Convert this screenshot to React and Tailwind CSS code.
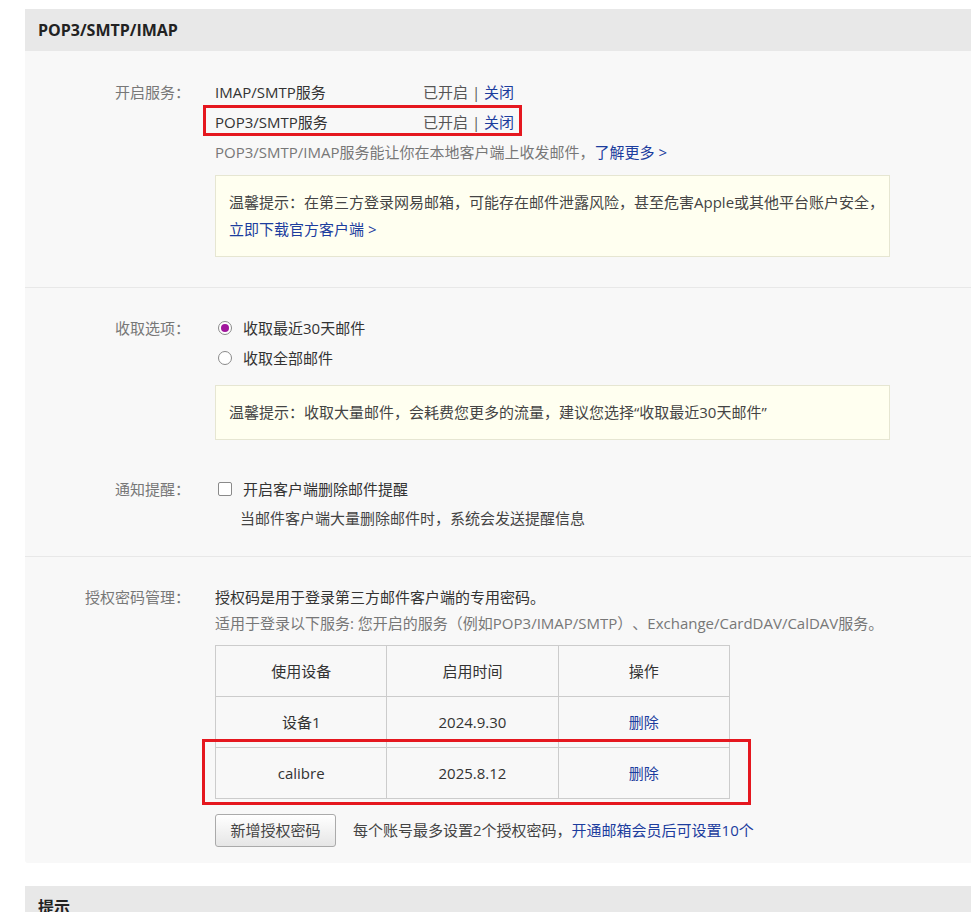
import React from 'react';

const Label = ({ text, lh = 'leading-[30px]' }) => (
  <div className={`w-[165px] shrink-0 whitespace-nowrap text-right text-[#777] ${lh}`}>
    {text}
    <span className="inline-block w-[15px] text-center">：</span>
  </div>
);

const Radio = ({ checked }) => (
  <span className="flex h-[14px] w-[14px] items-center justify-center rounded-full border border-[#8a8a8a] bg-white">
    {checked && <span className="h-[8px] w-[8px] rounded-full bg-[#a0169c]" />}
  </span>
);

const Tip = ({ children, className = '' }) => (
  <div className={`w-[675px] border border-[#e6e6d2] bg-[#fffff0] px-[13px] py-[13px] leading-[27px] text-[#444] ${className}`}>
    {children}
  </div>
);

const devices = [
  { name: '设备1', date: '2024.9.30' },
  { name: 'calibre', date: '2025.8.12' },
];

export default function App() {
  return (
    <div className="min-h-[912px] bg-white pt-[9px] font-['Open_Sans','Noto_Sans_CJK_SC',sans-serif] text-[15px] text-[#333] [text-spacing-trim:space-all]">
      <div className="ml-[25px] overflow-hidden rounded-bl-[3px] bg-[#f8f8f8]">
        <div className="flex h-[42px] items-center bg-[#e8e8e8] px-[13px] text-[16px] font-bold text-[#222]">
          POP3/SMTP/IMAP
        </div>

        {/* 开启服务 */}
        <div className="flex gap-[25px] border-b border-[#e8e8e8] pb-[30px] pt-[26px]">
          <Label text="开启服务" />
          <div>
            <div className="flex leading-[30px]">
              <span className="w-[208px]">IMAP/SMTP服务</span>
              <span className="text-[#555]">已开启 | <a href="#" className="text-[#1c3d9e]">关闭</a></span>
            </div>
            <div className="relative flex leading-[30px]">
              <span className="w-[208px]">POP3/SMTP服务</span>
              <span className="text-[#555]">已开启 | <a href="#" className="text-[#1c3d9e]">关闭</a></span>
              <div className="absolute left-[-12px] top-[-2px] h-[31px] w-[319px] border-[3px] border-[#e5171f]" />
            </div>
            <div className="leading-[30px] text-[#777]">
              POP3/SMTP/IMAP服务能让你在本地客户端上收发邮件，<a href="#" className="text-[#1c3d9e]">了解更多 &gt;</a>
            </div>
            <Tip className="mt-[8px]">
              <div className="whitespace-nowrap">温馨提示：在第三方登录网易邮箱，可能存在邮件泄露风险，甚至危害Apple或其他平台账户安全，</div>
              <a href="#" className="text-[#1c3d9e]">立即下载官方客户端 &gt;</a>
            </Tip>
          </div>
        </div>

        {/* 收取选项 / 通知提醒 */}
        <div className="border-b border-[#e8e8e8] pb-[24px] pt-[25px]">
          <div className="flex gap-[25px]">
            <Label text="收取选项" />
            <div>
              <div className="flex items-center gap-[11px] pl-[3px] leading-[30px]">
                <Radio checked />
                <span>收取最近30天邮件</span>
              </div>
              <div className="flex items-center gap-[11px] pl-[3px] leading-[30px]">
                <Radio />
                <span>收取全部邮件</span>
              </div>
              <Tip className="mt-[12px]">温馨提示：收取大量邮件，会耗费您更多的流量，建议您选择“收取最近30天邮件”</Tip>
            </div>
          </div>
          <div className="mt-[34px] flex gap-[25px]">
            <Label text="通知提醒" />
            <div>
              <div className="flex items-center gap-[11px] pl-[3px] leading-[30px]">
                <span className="h-[14px] w-[14px] rounded-[2px] border border-[#8a8a8a] bg-white" />
                <span>开启客户端删除邮件提醒</span>
              </div>
              <div className="pl-[25px] leading-[28px] text-[#444]">当邮件客户端大量删除邮件时，系统会发送提醒信息</div>
            </div>
          </div>
        </div>

        {/* 授权密码管理 */}
        <div className="flex gap-[25px] pb-[16px] pt-[27px]">
          <Label text="授权密码管理" lh="leading-[26px]" />
          <div>
            <div className="leading-[26px]">授权码是用于登录第三方邮件客户端的专用密码。</div>
            <div className="whitespace-nowrap leading-[26px] text-[#777]">适用于登录以下服务: 您开启的服务（例如POP3/IMAP/SMTP）、Exchange/CardDAV/CalDAV服务。</div>
            <div className="relative mt-[9px] w-[515px]">
              <table className="w-[515px] table-fixed border-collapse text-center">
                <thead>
                  <tr className="h-[51px]">
                    <th className="border border-[#cccccc] font-normal">使用设备</th>
                    <th className="border border-[#cccccc] font-normal">启用时间</th>
                    <th className="border border-[#cccccc] font-normal">操作</th>
                  </tr>
                </thead>
                <tbody>
                  {devices.map((d) => (
                    <tr key={d.name} className="h-[51px]">
                      <td className="border border-[#cccccc]">{d.name}</td>
                      <td className="border border-[#cccccc]">{d.date}</td>
                      <td className="border border-[#cccccc]"><a href="#" className="text-[#1c3d9e]">删除</a></td>
                    </tr>
                  ))}
                </tbody>
              </table>
              <div className="absolute left-[-13px] top-[94px] h-[66px] w-[549px] border-[3px] border-[#e5171f]" />
            </div>
            <div className="mt-[15px] flex items-center">
              <button className="h-[33px] w-[121px] rounded-[3px] border border-[#aaaaaa] bg-gradient-to-b from-white to-[#e6e6e6] text-[#444]">
                新增授权密码
              </button>
              <span className="ml-[17px] text-[#444]">
                每个账号最多设置2个授权密码，<a href="#" className="text-[#1c3d9e]">开通邮箱会员后可设置10个</a>
              </span>
            </div>
          </div>
        </div>
      </div>

      <div className="ml-[25px] mt-[23px] bg-[#e8e8e8]">
        <div className="flex h-[42px] items-center px-[13px] text-[16px] font-bold text-[#222]">提示</div>
      </div>
    </div>
  );
}
